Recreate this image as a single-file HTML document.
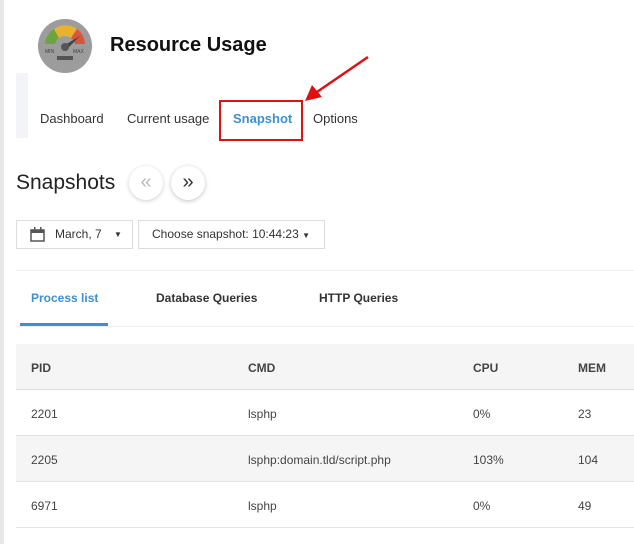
<html><head><style>
body{margin:0;width:634px;height:544px;background:#fff;font-family:"Liberation Sans",sans-serif;position:relative;overflow:hidden;color:#333}
.a{position:absolute}
.nav{font-size:13px;color:#333;top:111px}
.dd{border:1px solid #ddd;height:27px;top:220px;font-size:12px;line-height:27px;color:#333}
.tab{top:291px;font-size:12px;font-weight:bold;color:#333}
.row{left:16px;width:618px;height:46px;border-bottom:1px solid #e3e3e3;font-size:12px;color:#444}
.row span{position:absolute;top:17px}
.hd span{font-weight:bold;color:#444}
</style></head><body>
<div class="a" style="left:0;top:0;width:4px;height:544px;background:#e8e8e8"></div>
<svg class="a" style="left:37px;top:18px" width="56" height="56" viewBox="0 0 56 56">
<circle cx="28" cy="28" r="27" fill="#9c9c9c"/>
<path d="M8 26 A20 20 0 0 1 17 11 L22 20 A10 10 0 0 0 18 26Z" fill="#6ca540"/>
<path d="M17 11 A20 20 0 0 1 40 11 L34 20 A10 10 0 0 0 22 20Z" fill="#e8b22e"/>
<path d="M40 11 A20 20 0 0 1 48 26 L38 26 A10 10 0 0 0 34 20Z" fill="#d9553c"/>
<path d="M26 28 L43 18 L30 31Z" fill="#444"/>
<circle cx="28" cy="29" r="4" fill="#555"/>
<text x="8" y="35" font-size="5" fill="#444" font-family="Liberation Sans">MIN</text>
<text x="36" y="35" font-size="5" fill="#444" font-family="Liberation Sans">MAX</text>
<rect x="20" y="38" width="16" height="4" fill="#555"/>
</svg>
<div class="a" style="left:110px;top:34px;font-size:20px;font-weight:bold;color:#111">Resource Usage</div>
<div class="a" style="left:16px;top:73px;width:12px;height:65px;background:#f3f4f7"></div>
<div class="a nav" style="left:40px">Dashboard</div>
<div class="a nav" style="left:127px">Current usage</div>
<div class="a nav" style="left:233px;font-weight:bold;color:#3d8fd6">Snapshot</div>
<div class="a nav" style="left:313px">Options</div>
<div class="a" style="left:219px;top:100px;width:80px;height:37px;border:2px solid #e01010"></div>
<svg class="a" style="left:300px;top:52px" width="75" height="55"><line x1="68" y1="5" x2="14" y2="42" stroke="#e01010" stroke-width="2.5"/><path d="M5 49 L12 33 L22 45Z" fill="#e01010"/></svg>
<div class="a" style="left:16px;top:171px;font-size:21px;color:#222">Snapshots</div>
<div class="a" style="left:129px;top:166px;width:34px;height:34px;border-radius:50%;background:#fff;box-shadow:0 1px 4px rgba(0,0,0,.2);text-align:center;line-height:32px;font-size:20px;color:#bbb">«</div>
<div class="a" style="left:171px;top:166px;width:34px;height:34px;border-radius:50%;background:#fff;box-shadow:0 1px 4px rgba(0,0,0,.25);text-align:center;line-height:32px;font-size:20px;color:#333">»</div>
<div class="a dd" style="left:16px;width:115px"><svg class="a" style="left:13px;top:6px" width="15" height="15"><rect x="1" y="3" width="13" height="11" fill="none" stroke="#555" stroke-width="1.5"/><rect x="1" y="3" width="13" height="3" fill="#555"/><rect x="4" y="0" width="1.5" height="4" fill="#555"/><rect x="10" y="0" width="1.5" height="4" fill="#555"/></svg><span class="a" style="left:38px">March, 7</span><span class="a" style="left:97px;font-size:8px">▼</span></div>
<div class="a dd" style="left:138px;width:185px"><span class="a" style="left:13px">Choose snapshot: 10:44:23 <span style="font-size:8px">▼</span></span></div>
<div class="a" style="left:16px;top:270px;width:618px;height:1px;background:#eee"></div>
<div class="a tab" style="left:31px;color:#3d8fd6">Process list</div>
<div class="a tab" style="left:156px">Database Queries</div>
<div class="a tab" style="left:319px">HTTP Queries</div>
<div class="a" style="left:16px;top:326px;width:618px;height:1px;background:#eee"></div>
<div class="a" style="left:20px;top:323px;width:88px;height:3px;background:#3d8fd6"></div>
<div class="a row hd" style="top:344px;height:45px;background:#f5f5f5;border-bottom:1px solid #ddd"><span style="left:15px">PID</span><span style="left:232px">CMD</span><span style="left:457px">CPU</span><span style="left:562px">MEM</span></div>
<div class="a row" style="top:390px;height:45px"><span style="left:15px">2201</span><span style="left:232px">lsphp</span><span style="left:457px">0%</span><span style="left:562px">23</span></div>
<div class="a row" style="top:436px;height:45px;background:#f5f5f5"><span style="left:15px">2205</span><span style="left:232px">lsphp:domain.tld/script.php</span><span style="left:457px">103%</span><span style="left:562px">104</span></div>
<div class="a row" style="top:482px;height:45px"><span style="left:15px">6971</span><span style="left:232px">lsphp</span><span style="left:457px">0%</span><span style="left:562px">49</span></div>
</body></html>
